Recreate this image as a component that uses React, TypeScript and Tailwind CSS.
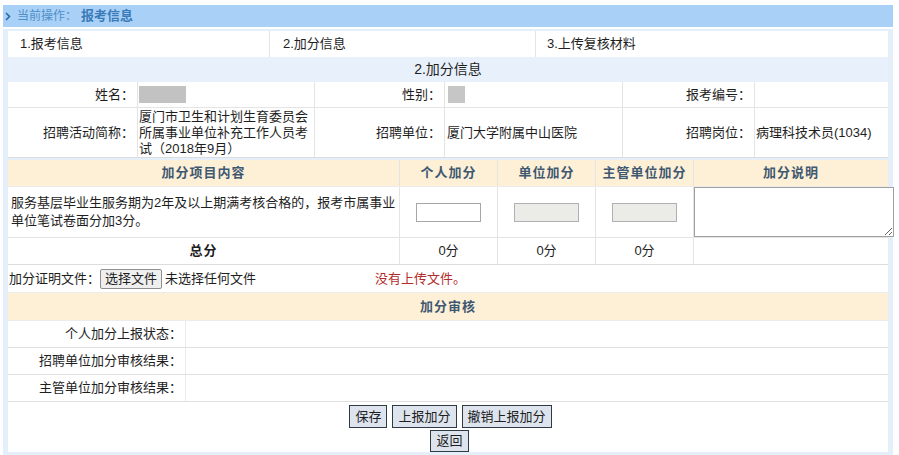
import React from "react";

const cell = "border-r border-[#e4e4e4] last:border-r-0";

const InfoLabel: React.FC<{ children: React.ReactNode }> = ({ children }) => (
  <div className={`${cell} flex items-center justify-end pr-[3px]`}>{children}</div>
);

const HeadCell: React.FC<{ children: React.ReactNode }> = ({ children }) => (
  <div className={`${cell} flex items-center justify-center font-bold tracking-[1px] text-[#3f5872]`}>{children}</div>
);

const App: React.FC = () => {
  return (
    <div className="w-[899px] bg-white pt-[5px] text-[13px] text-[#1e1e1e] font-['Liberation_Sans','Noto_Sans_CJK_SC',sans-serif]">
      {/* current operation bar */}
      <div className="ml-[3px] w-[890px] h-[22px] bg-[#a9d1f7] flex items-center">
        <svg width="6" height="9" viewBox="0 0 6 9" className="ml-[2px] mr-[6px]">
          <path d="M1 1 L4.5 4.5 L1 8" stroke="#2b6aa6" strokeWidth="1.6" fill="none" />
        </svg>
        <span className="text-[12px] text-[#4f8fc7]">当前操作：</span>
        <span className="ml-[4px] text-[13px] font-bold text-[#3a7bb8]">报考信息</span>
      </div>

      {/* panel */}
      <div className="mt-[2px] ml-[3px] w-[890px] bg-[#e5effa] pt-[2px] pb-[3px] pl-[5px] pr-[5px]">
        {/* steps */}
        <div className="grid grid-cols-[262px_266px_352px] h-[26px] bg-white">
          <div className={`${cell} flex items-center pl-[12px]`}>1.报考信息</div>
          <div className={`${cell} flex items-center pl-[13px]`}>2.加分信息</div>
          <div className="flex items-center pl-[11px]">3.上传复核材料</div>
        </div>

        <div className="h-[25px] flex items-center justify-center text-[14px] bg-[#e8f1fb]">2.加分信息</div>

        {/* applicant info */}
        <div className="bg-white">
          <div className="grid grid-cols-[130px_177px_130px_178px_132px_133px] h-[26px] border-b border-[#e4e4e4]">
            <InfoLabel>姓名：</InfoLabel>
            <div className={`${cell} flex items-center pl-[1px]`}>
              <div className="w-[47px] h-[17px] bg-[#c2c2c2]" />
            </div>
            <InfoLabel>性别：</InfoLabel>
            <div className={`${cell} flex items-center pl-[3px]`}>
              <div className="w-[17px] h-[17px] bg-[#c6c6c6]" />
            </div>
            <InfoLabel>报考编号：</InfoLabel>
            <div className={cell} />
          </div>
          <div className="grid grid-cols-[130px_177px_130px_178px_132px_133px] h-[50px] border-b border-[#dcdcdc]">
            <InfoLabel>招聘活动简称：</InfoLabel>
            <div className={`${cell} flex items-center pl-[1px] leading-[16px]`}>
              厦门市卫生和计划生育委员会所属事业单位补充工作人员考试（2018年9月）
            </div>
            <InfoLabel>招聘单位：</InfoLabel>
            <div className={`${cell} flex items-center pl-[2px]`}>厦门大学附属中山医院</div>
            <InfoLabel>招聘岗位：</InfoLabel>
            <div className={`${cell} flex items-center pl-[1px]`}>病理科技术员(1034)</div>
          </div>
        </div>

        {/* points table */}
        <div className="mt-[2px] bg-white">
          <div className="grid grid-cols-[392px_98px_98px_98px_194px] h-[27px] bg-[#fdf0d6] border-b border-[#ececec]">
            <HeadCell>加分项目内容</HeadCell>
            <HeadCell>个人加分</HeadCell>
            <HeadCell>单位加分</HeadCell>
            <HeadCell>主管单位加分</HeadCell>
            <HeadCell>加分说明</HeadCell>
          </div>
          <div className="grid grid-cols-[392px_98px_98px_98px_194px] h-[51px] border-b border-[#e4e4e4]">
            <div className={`${cell} flex items-center pl-[3px] pr-[2px] leading-[18px]`}>
              服务基层毕业生服务期为2年及以上期满考核合格的，报考市属事业单位笔试卷面分加3分。
            </div>
            <div className={`${cell} flex items-center justify-center`}>
              <input type="text" className="w-[65px] h-[19px] border border-[#a7a7a7] bg-white outline-none" />
            </div>
            <div className={`${cell} flex items-center justify-center`}>
              <input type="text" disabled className="w-[65px] h-[19px] border border-[#b0b0b0] bg-[#ebebe7]" />
            </div>
            <div className={`${cell} flex items-center justify-center`}>
              <input type="text" disabled className="w-[65px] h-[19px] border border-[#b0b0b0] bg-[#ebebe7]" />
            </div>
            <div className="flex items-center">
              <textarea className="shrink-0 w-[200px] min-w-[200px] h-[50px] border border-[#a0a0a0] bg-white outline-none" />
            </div>
          </div>
          <div className="grid grid-cols-[392px_98px_98px_98px_194px] h-[27px] border-b border-[#dcdcdc]">
            <div className={`${cell} flex items-center justify-center font-bold tracking-[1px]`}>总分</div>
            <div className={`${cell} flex items-center justify-center`}>0分</div>
            <div className={`${cell} flex items-center justify-center`}>0分</div>
            <div className={`${cell} flex items-center justify-center`}>0分</div>
            <div className={cell} />
          </div>
          <div className="h-[28px] flex items-center pl-[1px] border-b border-[#ececec]">
            <span>加分证明文件：</span>
            <span className="h-[20px] px-[4px] flex items-center border border-[#8f8f8f] rounded-[2px] bg-[#efefef] text-[13px]">
              选择文件
            </span>
            <span className="ml-[3px]">未选择任何文件</span>
            <span className="ml-[119px] text-[#b22b2b]">没有上传文件。</span>
          </div>
        </div>

        {/* review */}
        <div className="bg-white">
          <div className="h-[28px] bg-[#fdf0d6] flex items-center justify-center font-bold tracking-[1px] text-[#3f5872] border-b border-[#ececec]">
            加分审核
          </div>
          {["个人加分上报状态：", "招聘单位加分审核结果：", "主管单位加分审核结果："].map((label) => (
            <div key={label} className="grid grid-cols-[178px_702px] h-[27px] border-b border-[#e0e0e0]">
              <div className="border-r border-[#ececec] flex items-center justify-end pr-[3px]">{label}</div>
              <div />
            </div>
          ))}

          <div className="pt-[3px] flex flex-col items-center gap-[2px]">
            <div className="flex gap-[5px] pl-[5px]">
              <button className="h-[23px] px-[5px] border border-[#2f3a46] bg-[#dde4ee] text-[13px]">保存</button>
              <button className="h-[23px] px-[5px] border border-[#2f3a46] bg-[#dde4ee] text-[13px]">上报加分</button>
              <button className="h-[23px] px-[5px] border border-[#2f3a46] bg-[#dde4ee] text-[13px]">撤销上报加分</button>
            </div>
            <button className="h-[22px] px-[5px] border border-[#2f3a46] bg-[#dde4ee] text-[13px] ml-[3px]">返回</button>
          </div>
        </div>
      </div>
    </div>
  );
};

export default App;
